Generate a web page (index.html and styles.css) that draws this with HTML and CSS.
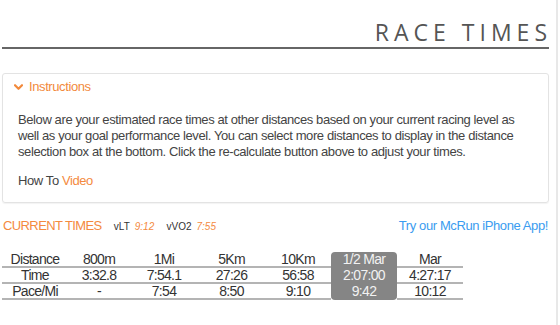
FILE: index.html
```html
<!DOCTYPE html>
<html lang="en">
<head>
<meta charset="utf-8">
<title>Race Times</title>
<link rel="stylesheet" href="styles.css">
</head>
<body>
<div class="page">
  <div class="content">
    <h1 class="title">RACE TIMES</h1>

    <div class="panel">
      <div class="panel-head">
        <svg class="chev" width="9" height="7" viewBox="0 0 9 7" aria-hidden="true"><path d="M1 1.2 L4.5 4.8 L8 1.2" fill="none" stroke="#f28a3c" stroke-width="2.2" stroke-linecap="round" stroke-linejoin="round"/></svg>
        <span>Instructions</span>
      </div>
      <div class="panel-body">
        <p>Below are your estimated race times at other distances based on your current racing level as well as your goal performance level. You can select more distances to display in the distance selection box at the bottom. Click the re-calculate button above to adjust your times.</p>
        <p>How To <a class="orange-link" href="#">Video</a></p>
      </div>
    </div>

    <div class="current">
      <div class="current-left">
        <span class="ct">CURRENT TIMES</span>
        <span class="lbl">vLT</span><span class="val">9:12</span>
        <span class="lbl">vVO2</span><span class="val">7:55</span>
      </div>
      <a class="app" href="#">Try our McRun iPhone App!</a>
    </div>

    <table class="times">
      <colgroup>
        <col class="c1"><col class="c2"><col class="c3"><col class="c4"><col class="c5"><col class="c6"><col class="c7">
      </colgroup>
      <tr>
        <td>Distance</td><td>800m</td><td>1Mi</td><td>5Km</td><td>10Km</td><td class="hl hl-top">1/2 Mar</td><td>Mar</td>
      </tr>
      <tr>
        <td>Time</td><td>3:32.8</td><td>7:54.1</td><td>27:26</td><td>56:58</td><td class="hl">2:07:00</td><td>4:27:17</td>
      </tr>
      <tr>
        <td>Pace/Mi</td><td>-</td><td>7:54</td><td>8:50</td><td>9:10</td><td class="hl hl-bottom">9:42</td><td>10:12</td>
      </tr>
    </table>
  </div>
</div>
</body>
</html>
```

FILE: styles.css
```css
html, body {
  margin: 0;
  padding: 0;
  background: #fff;
}

body {
  font-family: "Liberation Sans", Arial, sans-serif;
  font-size: 13px;
  letter-spacing: -0.4px;
  color: #333;
}

.page {
  width: 558px;
  height: 325px;
  box-sizing: border-box;
  border-right: 2px solid #e8e8e8;
  overflow: hidden;
}

.content {
  margin-left: 2px;
  width: 547px;
}

.title {
  margin: 17px 0 0;
  padding-right: 2px;
  text-align: right;
  font-family: "Open Sans", sans-serif;
  font-weight: 400;
  font-size: 23px;
  line-height: 30px;
  letter-spacing: 5px;
  color: #555;
  border-bottom: 2px solid #666;
}

.title::after {
  content: "";
  margin-right: -5px;
}

.panel {
  margin-top: 24px;
  border: 1px solid #e3e3e3;
  border-radius: 3px;
  box-shadow: 0 1px 1px rgba(0, 0, 0, 0.05);
  padding: 5px 14px 13px 11px;
}

.panel-head {
  display: flex;
  align-items: center;
  gap: 6px;
  font-size: 13px;
  line-height: 16px;
  color: #f28a3c;
}

.chev {
  display: block;
}

.panel-body {
  margin-top: 17px;
  padding-left: 4px;
  color: #444;
}

.panel-body p {
  margin: 0;
  line-height: 16px;
}

.panel-body p + p {
  margin-top: 13px;
}

.orange-link {
  color: #f48a3e;
  text-decoration: none;
}

.current {
  margin-top: 15px;
  display: flex;
  justify-content: space-between;
  align-items: baseline;
  line-height: 16px;
}

.current-left {
  padding-left: 1px;
}

.ct {
  color: #f48a3e;
  letter-spacing: -0.6px;
  margin-right: 9px;
}

.lbl {
  font-size: 10px;
  letter-spacing: 0;
  color: #333;
  margin-right: 5px;
}

.val {
  font-size: 10px;
  font-style: italic;
  letter-spacing: 0;
  color: #f48a3e;
  margin-right: 9px;
}

.app {
  color: #3a9cf0;
  text-decoration: none;
  margin-right: 1px;
}

.times {
  margin-top: 17px;
  border-collapse: separate;
  border-spacing: 0;
  table-layout: fixed;
  width: 461px;
}

.c1 { width: 66px; }
.c2 { width: 62px; }
.c3 { width: 68px; }
.c4 { width: 67px; }
.c5 { width: 66px; }
.c6 { width: 66px; }
.c7 { width: 66px; }

.times td {
  padding: 0;
  height: 14px;
  font-size: 14px;
  letter-spacing: -0.7px;
  line-height: 14px;
  text-align: center;
  border-bottom: 2px solid #b4b4b4;
  color: #333;
  white-space: nowrap;
}

.times td.hl {
  background: #858585;
  color: #f2f2f2;
  border-bottom-color: #858585;
}

.times td.hl-top {
  border-radius: 4px 4px 0 0;
}

.times td.hl-bottom {
  border-radius: 0 0 4px 4px;
}
```
